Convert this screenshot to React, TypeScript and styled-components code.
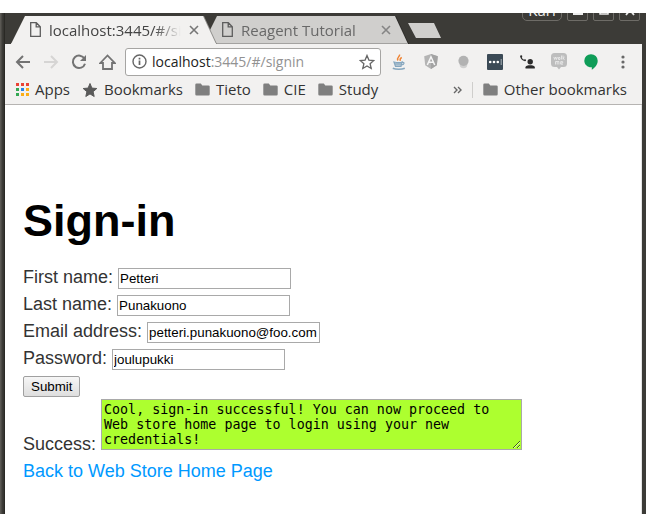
import React from "react";
import styled, { createGlobalStyle } from "styled-components";

const Global = createGlobalStyle`
  * { box-sizing: border-box; }
  body { margin: 0; background: #fff; }
`;

const ui = `"Open Sans", "Noto Sans", sans-serif`;

const Window = styled.div`
  margin: 13px 0;
  padding: 0 4px 0 5px;
  background: linear-gradient(to right, #5a5853 0, #5a5853 1px, #3c3b37 2px, #3c3b37 3px, #24231f 5px, #3c3b37 5px);
  font-family: ${ui};
  color: #333;
`;

const TabStrip = styled.div`
  display: flex;
  align-items: flex-end;
  height: 31px;
  padding-left: 6px;
  overflow: hidden;
`;

const TabShadow = styled.div<{ $active?: boolean }>`
  position: relative;
  z-index: ${(p) => (p.$active ? 1 : 0)};
  filter: drop-shadow(1px 0 0 ${(p) => (p.$active ? "#8d8c89" : "#2c2b28")});
  & + & { margin-left: -13px; }
`;

const Tab = styled.div<{ $active?: boolean }>`
  display: flex;
  align-items: center;
  gap: 8px;
  width: 205px;
  height: 28px;
  padding: 0 17px 0 19px;
  background: ${(p) => (p.$active ? "#f2f1f0" : "#d0cfcd")};
  border-bottom: 1px solid ${(p) => (p.$active ? "#f2f1f0" : "#a3a2a0")};
  clip-path: polygon(0 100%, 14px 0, calc(100% - 13px) 0, 100% 100%);
  color: ${(p) => (p.$active ? "#444" : "#686868")};
`;

const TabTitle = styled.span<{ $fade?: boolean }>`
  flex: 1;
  min-width: 0;
  overflow: hidden;
  white-space: nowrap;
  font-size: 15px;
  line-height: 24px;
  ${(p) => p.$fade && "mask-image: linear-gradient(to right, #000 80%, transparent 100%);"}
`;

const IconButton = styled.button`
  display: flex;
  align-items: center;
  justify-content: center;
  flex: none;
  padding: 0;
  border: 0;
  background: none;
  svg { display: block; }
`;

const NewTab = styled.button`
  align-self: flex-start;
  flex: none;
  width: 33px;
  height: 15px;
  margin: 10px 0 0;
  padding: 0;
  border: 0;
  background: #d0cfcd;
  clip-path: polygon(0 0, 26px 0, 100% 100%, 8px 100%);
`;

const Controls = styled.div`
  display: flex;
  align-self: flex-start;
  gap: 5px;
  margin: -14px 2px 0 auto;
`;

const ControlButton = styled.button<{ $wide?: boolean }>`
  display: flex;
  align-items: center;
  justify-content: center;
  width: ${(p) => (p.$wide ? 40 : 21)}px;
  height: 22px;
  padding: 0;
  border: 1px solid #6e6c67;
  border-radius: ${(p) => (p.$wide ? 5 : 2)}px;
  background: #3c3b37;
  color: #eee;
  font: 15px/24px ${ui};
`;

const Toolbar = styled.div`
  display: flex;
  align-items: center;
  height: 35px;
  padding-left: 4px;
  background: #f2f1f0;
`;

const NavButton = styled(IconButton)`
  width: 28px;
  height: 28px;
`;

const Address = styled.label`
  display: flex;
  align-items: center;
  flex: 1;
  min-width: 0;
  gap: 5px;
  height: 28px;
  margin: 0 2px 0 4px;
  padding: 0 5px 0 6px;
  border: 1px solid #a6a5a3;
  border-radius: 3px;
  background: #fff;
`;

const Url = styled.span`
  flex: 1;
  min-width: 0;
  overflow: hidden;
  white-space: nowrap;
  font-size: 14px;
  line-height: 24px;
  color: #929292;
  b { font-weight: 400; color: #222; }
`;

const ExtensionButton = styled(IconButton)`
  width: 32px;
  height: 28px;
`;

const Extensions = styled.div`
  display: flex;
  margin-right: 3px;
`;

const BookmarkBar = styled.nav`
  display: flex;
  align-items: center;
  height: 26px;
  padding: 0 15px 4px 11px;
  border-bottom: 1px solid #b6b4b2;
  background: #f2f1f0;
`;

const Bookmark = styled.a`
  display: flex;
  align-items: center;
  flex: none;
  gap: 6px;
  margin-right: 12px;
  color: #333;
  font-size: 15px;
  line-height: 21px;
  text-decoration: none;
  white-space: nowrap;
  svg { display: block; }
  &:last-child { margin-right: 0; }
`;

const More = styled(IconButton)`
  height: 16px;
  margin-left: auto;
  padding-right: 10px;
  border-right: 1px solid #cfcecc;
  margin-right: 10px;
`;

const Page = styled.main`
  padding: 89px 18px 29px;
  background: #fff;
  border-right: 1px solid #e4e4e4;
  font-family: "Liberation Sans", Arial, sans-serif;
  font-size: 18px;
  line-height: 27px;
  color: #333;
`;

const Title = styled.h1`
  margin: 0 0 16px;
  font-size: 45px;
  line-height: 54px;
  color: #000;
`;

const Row = styled.div`
  white-space: nowrap;
`;

const Field = styled.input`
  width: 173px;
  height: 21px;
  padding: 1px;
  border: 1px solid #a9a9a9;
  background: #fff;
  color: #000;
  font-family: "Liberation Sans", Arial, sans-serif;
`;

const Submit = styled.button`
  height: 21px;
  padding: 0 7px;
  border: 1px solid #a0a0a0;
  border-radius: 2px;
  background: linear-gradient(#f6f6f6, #dedede);
  color: #000;
  font-family: "Liberation Sans", Arial, sans-serif;
`;

const Message = styled.textarea`
  width: 421px;
  height: 51px;
  margin: 0;
  padding: 2px;
  border: 1px solid #a9a9a9;
  background: #adff2f;
  color: #000;
  font-family: "DejaVu Sans Mono", monospace;
  line-height: 15px;
  vertical-align: baseline;
`;

const BackLink = styled.a`
  color: #0099ff;
  text-decoration: none;
`;

const PageIcon = () => (
  <svg width="11" height="15" viewBox="0 0 11 15" fill="none" stroke="#5d5d5d" strokeWidth="1.3">
    <path d="M.7.7h5.6l4 4v9.6H.7zM6.2.9v4h4" />
  </svg>
);

const CloseIcon = ({ color }: { color: string }) => (
  <svg width="10" height="10" viewBox="0 0 10 10" stroke={color} strokeWidth="1.6">
    <path d="M1 1l8 8M9 1L1 9" />
  </svg>
);

const FolderIcon = () => (
  <svg width="15" height="13" viewBox="0 0 15 13" fill="#7f7f7f">
    <path d="M1.5.5h4.3L7.3 2.4h6.2a1.2 1.2 0 0 1 1.2 1.2v7.7a1.2 1.2 0 0 1-1.2 1.2h-12A1.2 1.2 0 0 1 .3 11.3V1.7A1.2 1.2 0 0 1 1.5.5z" />
  </svg>
);

const appColors = ["#ea4335", "#ea4335", "#ea4335", "#34a853", "#2684e8", "#fbae17", "#34a853", "#fbae17", "#fbae17"];

const AppsIcon = () => (
  <svg width="13" height="13" viewBox="0 0 13 13">
    {appColors.map((c, i) => (
      <rect key={i} x={(i % 3) * 5} y={Math.floor(i / 3) * 5} width="3" height="3" fill={c} />
    ))}
  </svg>
);

const starPath = "M8 1.500l1.900 4.600 4.900.400-3.700 3.200 1.100 4.800L8 11.900l-4.200 2.600 1.100-4.800L1.200 6.500l4.900-.400z";

const extensions = [
  {
    name: "Java",
    icon: (
      <svg width="14" height="16" viewBox="0 0 14 16" fill="none">
        <path d="M7.5.5c1 2-3.500 3-1.500 6M9.800 3.500C7.500 4.500 8 5.500 8.300 6.800" stroke="#ef8434" strokeWidth="1.4" />
        <path d="M2 8c3 .8 6 .8 8 0l-1 4.300H3.500zM10 8.500c3-.8 2.500 2.300-.6 2.500" stroke="#86a7bf" strokeWidth="1.2" />
        <path d="M3 10h6.500M3.500 12.200h5.500M.8 14.200c3 1.300 9 1.300 12 0" stroke="#86a7bf" strokeWidth="1.5" />
      </svg>
    ),
  },
  {
    name: "Angular",
    icon: (
      <svg width="14" height="15" viewBox="0 0 14 15">
        <path d="M7 0l6.800 2.300-1 8.900L7 15l-5.800-3.800-1-8.900z" fill="#b4b4b4" />
        <path d="M7 0l6.800 2.300-1 8.900L7 15z" fill="#a3a3a3" />
        <path d="M3.300 11L7 2.800 10.700 11M4.800 8.300h4.400" fill="none" stroke="#f5f5f5" strokeWidth="1.5" />
      </svg>
    ),
  },
  {
    name: "Hint",
    icon: (
      <svg width="11" height="14" viewBox="0 0 11 14">
        <circle cx="5.5" cy="9.5" r="3.8" fill="#d0d0d0" />
        <circle cx="5.5" cy="5.8" r="5.1" fill="#b2b2b2" />
      </svg>
    ),
  },
  {
    name: "Passwords",
    icon: (
      <svg width="16" height="16" viewBox="0 0 16 16">
        <rect width="16" height="16" rx="1" fill="#3b4a56" />
        <circle cx="3.2" cy="8" r="1.3" fill="#fff" />
        <circle cx="7" cy="8" r="1.3" fill="#fff" />
        <circle cx="10.800" cy="8" r="1.3" fill="#fff" />
        <path d="M14.200 5v6" stroke="#aab2b8" />
      </svg>
    ),
  },
  {
    name: "Calls",
    icon: (
      <svg width="15" height="14" viewBox="0 0 15 14" fill="#2b2b2b">
        <path d="M.9 1.500c.2 2 1.500 3.200 3.600 4" fill="none" stroke="#2b2b2b" strokeWidth="1.2" />
        <circle cx="1.200" cy="1.300" r="1.1" />
        <circle cx="5" cy="5.300" r="1" />
        <circle cx="10.200" cy="6.800" r="2.7" />
        <path d="M5.500 13.500v-1.300c0-2.500 9.300-2.500 9.300 0v1.300z" />
      </svg>
    ),
  },
  {
    name: "WalkMe",
    icon: (
      <svg width="16" height="17" viewBox="0 0 16 17">
        <path d="M3.500 0h9A3.500 3.500 0 0 1 16 3.500v7a3.500 3.500 0 0 1-3.500 3.500H10l-2 2.500L6 14H3.500A3.500 3.500 0 0 1 0 10.500v-7A3.500 3.500 0 0 1 3.500 0z" fill="#bdbdbd" />
        <path d="M2.800 4l.9 2.500L4.600 4l.9 2.500L6.400 4M9 4.500H7.500v2H9zM10.500 2.500v4M12 2.500v4M13.600 4L12 5.300l1.600 1.200M4.500 11.500v-3h1.700v3M6.200 8.500h1.700v3M12 11.200H9.700V8.600h2V10h-2" fill="none" stroke="#eee" strokeWidth=".8" />
      </svg>
    ),
  },
  {
    name: "Hangouts",
    icon: (
      <svg width="14" height="16" viewBox="0 0 14 16">
        <path d="M7 .2a6.600 6.600 0 0 1 6.700 6.600c0 3.800-2.700 7.100-5.900 8.900v-2.400C3.600 13.600.3 10.600.3 6.800A6.600 6.600 0 0 1 7 .2z" fill="#0f9d58" />
      </svg>
    ),
  },
  {
    name: "Menu",
    icon: (
      <svg width="4" height="14" viewBox="0 0 4 14" fill="#686868">
        <circle cx="2" cy="2" r="1.6" />
        <circle cx="2" cy="7" r="1.6" />
        <circle cx="2" cy="12" r="1.6" />
      </svg>
    ),
  },
];

const fields = [
  { id: "first-name", label: "First name:", value: "Petteri" },
  { id: "last-name", label: "Last name:", value: "Punakuono" },
  { id: "email", label: "Email address:", value: "petteri.punakuono@foo.com" },
  { id: "password", label: "Password:", value: "joulupukki" },
];

export default function App() {
  return (
    <>
      <Global />
      <Window>
        <TabStrip>
          <TabShadow $active>
            <Tab $active>
              <PageIcon />
              <TabTitle $fade>localhost:3445/#/signin</TabTitle>
              <IconButton aria-label="Close tab"><CloseIcon color="#777" /></IconButton>
            </Tab>
          </TabShadow>
          <TabShadow>
            <Tab>
              <PageIcon />
              <TabTitle>Reagent Tutorial</TabTitle>
              <IconButton aria-label="Close tab"><CloseIcon color="#858585" /></IconButton>
            </Tab>
          </TabShadow>
          <NewTab aria-label="New tab" />
          <Controls>
            <ControlButton $wide>Kari</ControlButton>
            <ControlButton aria-label="Minimize">
              <svg width="10" height="12" viewBox="0 0 10 12"><path d="M0 10h10" stroke="#eee" strokeWidth="2" /></svg>
            </ControlButton>
            <ControlButton aria-label="Maximize">
              <svg width="10" height="12" viewBox="0 0 10 12"><path d="M1 1h8v9H1z" fill="none" stroke="#eee" strokeWidth="1.5" /></svg>
            </ControlButton>
            <ControlButton aria-label="Close">
              <svg width="10" height="12" viewBox="0 0 10 12"><path d="M1 1l8 10M9 1L1 11" stroke="#eee" strokeWidth="1.8" /></svg>
            </ControlButton>
          </Controls>
        </TabStrip>
        <Toolbar>
          <NavButton aria-label="Back">
            <svg width="16" height="14" viewBox="0 0 16 14" fill="none" stroke="#737373" strokeWidth="2"><path d="M8 1L2 7l6 6M2 7h13" /></svg>
          </NavButton>
          <NavButton aria-label="Forward">
            <svg width="16" height="14" viewBox="0 0 16 14" fill="none" stroke="#d6d5d4" strokeWidth="2"><path d="M8 1l6 6-6 6M14 7H1" /></svg>
          </NavButton>
          <NavButton aria-label="Reload">
            <svg width="16" height="16" viewBox="0 0 16 16" fill="none" stroke="#737373" strokeWidth="2"><path d="M13.500 4.800A6.200 6.200 0 1 0 14 9.700" /><path d="M15 1v6H9z" fill="#737373" stroke="none" /></svg>
          </NavButton>
          <NavButton aria-label="Home">
            <svg width="17" height="16" viewBox="0 0 17 16" fill="none" stroke="#737373" strokeWidth="1.8"><path d="M1.300 9L8.500 1.500 15.700 9H13v6H4V9z" /></svg>
          </NavButton>
          <Address>
            <svg width="15" height="15" viewBox="0 0 15 15" fill="none" stroke="#666" strokeWidth="1.4"><circle cx="7.500" cy="7.500" r="6.500" /><path d="M7.500 6.500V11M7.500 3.800v1.600" strokeWidth="1.7" /></svg>
            <Url><b>localhost</b>:3445/#/signin</Url>
            <IconButton aria-label="Bookmark this page">
              <svg width="16" height="16" viewBox="0 0 16 16" fill="none" stroke="#666" strokeWidth="1.3"><path d={starPath} /></svg>
            </IconButton>
          </Address>
          <Extensions>
            {extensions.map((e) => (
              <ExtensionButton key={e.name} aria-label={e.name}>{e.icon}</ExtensionButton>
            ))}
          </Extensions>
        </Toolbar>
        <BookmarkBar>
          <Bookmark href="#apps"><AppsIcon />Apps</Bookmark>
          <Bookmark href="#bookmarks">
            <svg width="16" height="16" viewBox="0 0 16 16" fill="#5a5a5a" stroke="#5a5a5a"><path d={starPath} /></svg>
            Bookmarks
          </Bookmark>
          <Bookmark href="#tieto"><FolderIcon />Tieto</Bookmark>
          <Bookmark href="#cie"><FolderIcon />CIE</Bookmark>
          <Bookmark href="#study"><FolderIcon />Study</Bookmark>
          <More aria-label="More bookmarks">
            <svg width="9" height="8" viewBox="0 0 9 8" fill="none" stroke="#666" strokeWidth="1.4"><path d="M1 1l3 3-3 3M5 1l3 3-3 3" /></svg>
          </More>
          <Bookmark href="#other"><FolderIcon />Other bookmarks</Bookmark>
        </BookmarkBar>
        <Page>
          <Title>Sign-in</Title>
          <form onSubmit={(e) => e.preventDefault()}>
            {fields.map((f) => (
              <Row key={f.id}>
                <label htmlFor={f.id}>{f.label}</label> <Field id={f.id} type="text" defaultValue={f.value} />
              </Row>
            ))}
            <Row><Submit type="submit">Submit</Submit></Row>
            <Row>
              <label htmlFor="success">Success:</label>{" "}
              <Message
                id="success"
                readOnly
                defaultValue="Cool, sign-in successful! You can now proceed to Web store home page to login using your new credentials!"
              />
            </Row>
          </form>
          <Row><BackLink href="#home">Back to Web Store Home Page</BackLink></Row>
        </Page>
      </Window>
    </>
  );
}
